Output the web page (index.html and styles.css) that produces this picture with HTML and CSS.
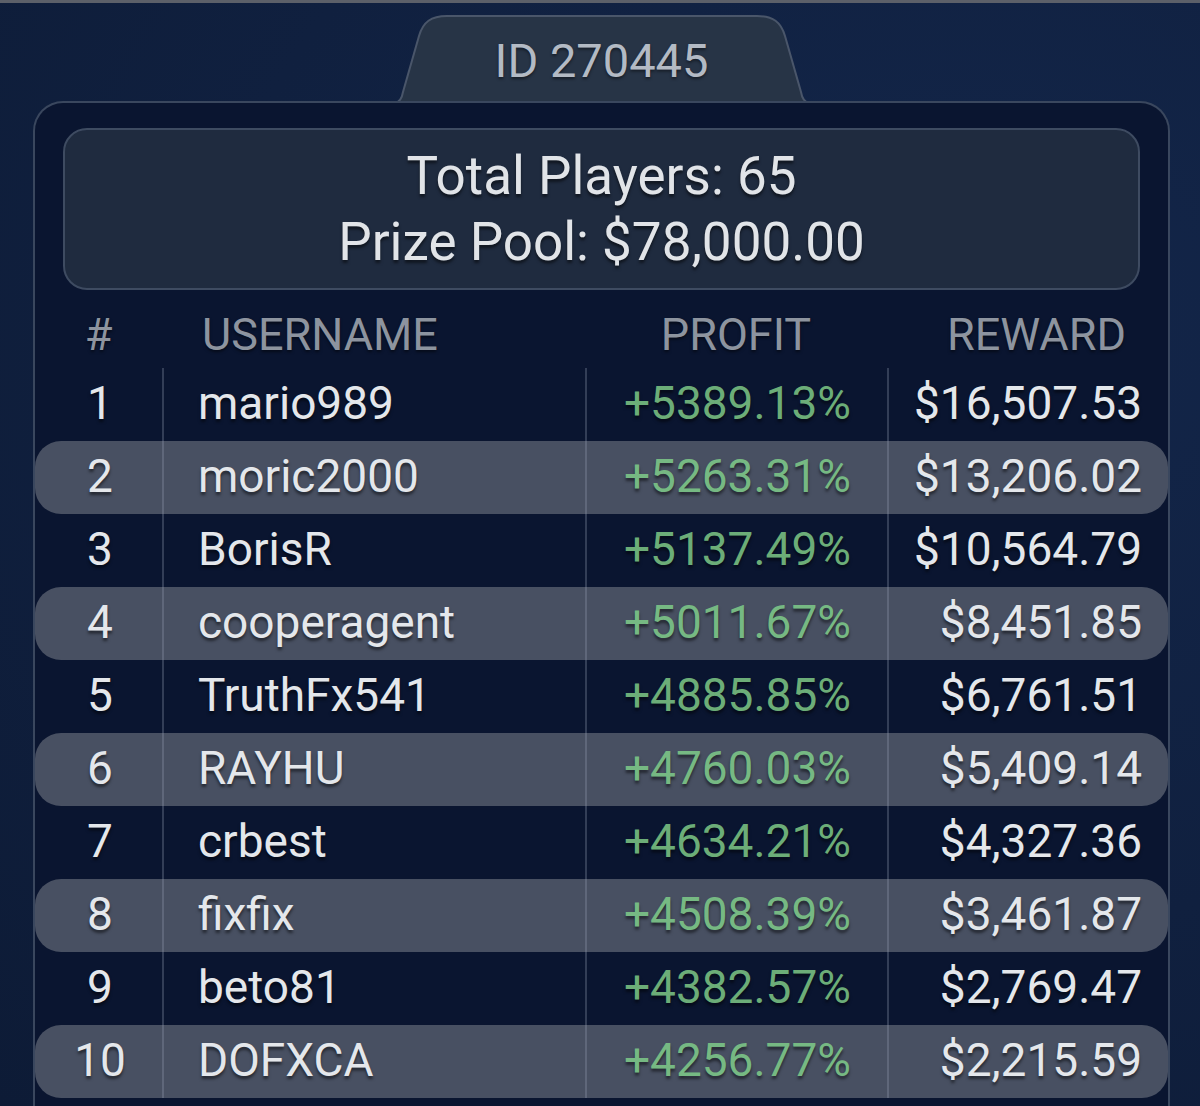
FILE: index.html
```html
<!DOCTYPE html>
<html lang="en">
<head>
  <meta charset="UTF-8" />
  <meta name="viewport" content="width=device-width, initial-scale=1.0" />
  <title>Tournament Leaderboard</title>
  <link rel="stylesheet" href="styles.css">
</head>
<body>
  <div class="topline"></div>
  <div class="board">
    <div class="tab">
      <svg class="tab-shape" width="414" height="90" viewBox="0 0 414 90">
        <path d="M0,89 C5,88 7,84 8,78 L24,22 C28,8 36,2 52,2 L362,2 C378,2 386,8 390,22 L406,78 C407,84 409,88 414,89 Z" fill="#273446" stroke="#4a566a" stroke-width="2" />
      </svg>
      <span class="tab-label">ID 270445</span>
    </div>

    <div class="panel">
      <div class="summary">
        <div>Total Players: 65</div>
        <div>Prize Pool: $78,000.00</div>
      </div>

      <div class="thead">
        <div class="c-rank">#</div>
        <div class="c-name">USERNAME</div>
        <div class="c-profit">PROFIT</div>
        <div class="c-reward">REWARD</div>
      </div>

      <div class="row">
        <div class="c-rank">1</div>
        <div class="c-name">mario989</div>
        <div class="c-profit">+5389.13%</div>
        <div class="c-reward">$16,507.53</div>
      </div>
      <div class="row alt">
        <div class="c-rank">2</div>
        <div class="c-name">moric2000</div>
        <div class="c-profit">+5263.31%</div>
        <div class="c-reward">$13,206.02</div>
      </div>
      <div class="row">
        <div class="c-rank">3</div>
        <div class="c-name">BorisR</div>
        <div class="c-profit">+5137.49%</div>
        <div class="c-reward">$10,564.79</div>
      </div>
      <div class="row alt">
        <div class="c-rank">4</div>
        <div class="c-name">cooperagent</div>
        <div class="c-profit">+5011.67%</div>
        <div class="c-reward">$8,451.85</div>
      </div>
      <div class="row">
        <div class="c-rank">5</div>
        <div class="c-name">TruthFx541</div>
        <div class="c-profit">+4885.85%</div>
        <div class="c-reward">$6,761.51</div>
      </div>
      <div class="row alt">
        <div class="c-rank">6</div>
        <div class="c-name">RAYHU</div>
        <div class="c-profit">+4760.03%</div>
        <div class="c-reward">$5,409.14</div>
      </div>
      <div class="row">
        <div class="c-rank">7</div>
        <div class="c-name">crbest</div>
        <div class="c-profit">+4634.21%</div>
        <div class="c-reward">$4,327.36</div>
      </div>
      <div class="row alt">
        <div class="c-rank">8</div>
        <div class="c-name">fixfix</div>
        <div class="c-profit">+4508.39%</div>
        <div class="c-reward">$3,461.87</div>
      </div>
      <div class="row">
        <div class="c-rank">9</div>
        <div class="c-name">beto81</div>
        <div class="c-profit">+4382.57%</div>
        <div class="c-reward">$2,769.47</div>
      </div>
      <div class="row alt">
        <div class="c-rank">10</div>
        <div class="c-name">DOFXCA</div>
        <div class="c-profit">+4256.77%</div>
        <div class="c-reward">$2,215.59</div>
      </div>
    </div>
  </div>
</body>
</html>
```

FILE: styles.css
```css
body {
  margin: 0;
  width: 1200px;
  height: 1106px;
  overflow: hidden;
  font-family: Roboto, 'Liberation Sans', sans-serif;
  color: #e4e7eb;
  background: radial-gradient(ellipse at 80% 30%, #13264a 0%, #10203f 55%, #0d1b36 100%);
}

.topline {
  height: 3px;
  background: #5c6069;
}

.board {
  margin: 0 30px 0 33px;
}

.tab {
  position: relative;
  width: 414px;
  height: 90px;
  margin: 11px auto 0;
  display: flex;
  justify-content: center;
  align-items: center;
}

.tab-shape {
  position: absolute;
  left: 0;
  top: 0;
}

.tab-label {
  position: relative;
  font-size: 47px;
  color: #b3bac4;
  padding-top: 2px;
  text-shadow: 0 2px 3px rgba(0, 0, 0, 0.45);
}

.panel {
  margin-top: -3px;
  border: 2px solid #3a475e;
  border-bottom: none;
  border-radius: 30px 30px 0 0;
  background: #0a1530;
  padding-top: 25px;
  height: 1010px;
  position: relative;
}

.summary {
  margin: 0 28px;
  height: 158px;
  border: 2px solid #3e4b61;
  border-radius: 24px;
  background: #1f2b3f;
  display: flex;
  flex-direction: column;
  justify-content: center;
  align-items: center;
  font-size: 53px;
  line-height: 66px;
  color: #e1e4e8;
  text-shadow: 0 3px 3px rgba(0, 0, 0, 0.5);
}

.thead, .row {
  display: grid;
  grid-template-columns: 127px 423px 302px 1fr;
  align-items: center;
  font-size: 46px;
}

.thead {
  height: 68px;
  padding-top: 10px;
  font-size: 45px;
  color: #8d949f;
  text-shadow: 0 2px 3px rgba(0, 0, 0, 0.5);
}

.thead .c-rank { text-align: center; }
.thead .c-name { padding-left: 40px; }
.thead .c-profit { text-align: center; }
.thead .c-reward { text-align: center; padding-left: 18px; }

.row {
  height: 73px;
  text-shadow: 0 3px 3px rgba(0, 0, 0, 0.5);
}

.row > div {
  height: 100%;
  display: flex;
  align-items: center;
  box-sizing: border-box;
  padding-bottom: 3px;
}

.row .c-rank { justify-content: center; padding-left: 3px; }
.row .c-name { padding-left: 34px; }
.row .c-profit { justify-content: flex-end; padding-right: 36px; color: #6cad78; }
.row .c-reward { justify-content: flex-end; padding-right: 26px; }

.row .c-name, .row .c-profit, .row .c-reward {
  border-left: 2px solid rgba(150, 160, 178, 0.3);
}

.row.alt {
  background: #485062;
  border-radius: 26px;
}

.row.alt .c-profit { color: #76b983; }
```
